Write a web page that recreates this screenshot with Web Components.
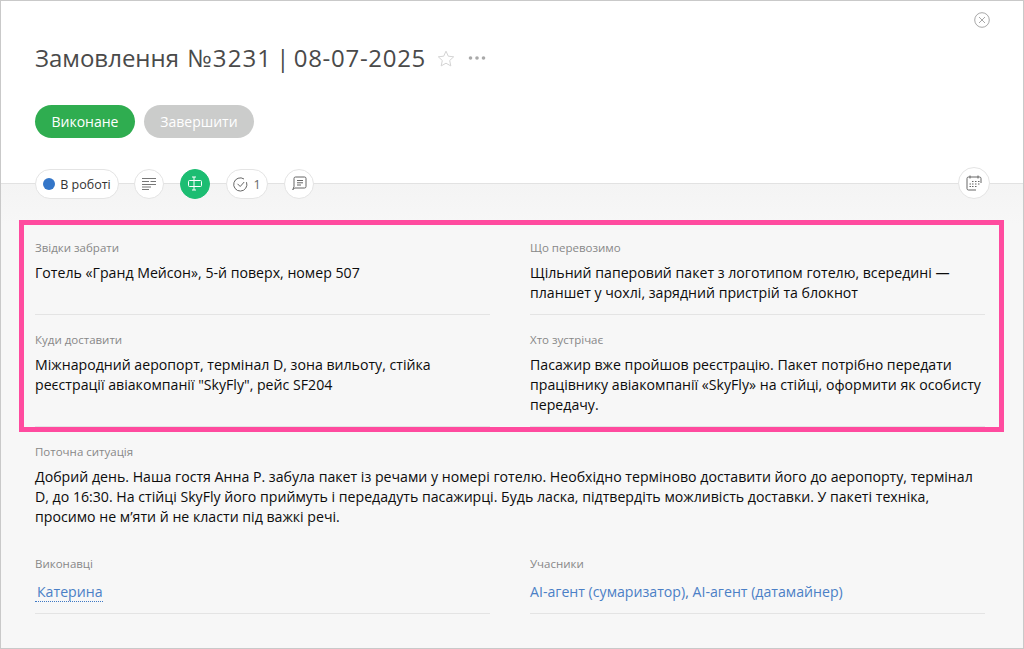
<!DOCTYPE html>
<html lang="uk">
<head>
<meta charset="utf-8">
<title>Замовлення</title>
<style>
  html, body { margin: 0; height: 100%; }
  body { font-family: "Open Sans", "Noto Sans", sans-serif; background: #fff; overflow: hidden; }
</style>
</head>
<body>
<order-card>
  <order-header slot="header"></order-header>
  <data-field label="Звідки забрати">Готель «Гранд Мейсон», 5-й поверх, номер 507</data-field>
  <data-field label="Що перевозимо">Щільний паперовий пакет з логотипом готелю, всередині — планшет у чохлі, зарядний пристрій та блокнот</data-field>
  <data-field label="Куди доставити">Міжнародний аеропорт, термінал D, зона вильоту, стійка реєстрації авіакомпанії "SkyFly", рейс SF204</data-field>
  <data-field label="Хто зустрічає">Пасажир вже пройшов реєстрацію. Пакет потрібно передати працівнику авіакомпанії «SkyFly» на стійці, оформити як особисту передачу.</data-field>
  <data-field wide label="Поточна ситуація">Добрий день. Наша гостя Анна Р. забула пакет із речами у номері готелю. Необхідно терміново доставити його до аеропорту, термінал D, до 16:30. На стійці SkyFly його приймуть і передадуть пасажирці. Будь ласка, підтвердіть можливість доставки. У пакеті техніка, просимо не м’яти й не класти під важкі речі.</data-field>
  <data-field people label="Виконавці"><user-link dotted>Катерина</user-link></data-field>
  <data-field people label="Учасники"><user-link>AI-агент (сумаризатор)</user-link>, <user-link>AI-агент (датамайнер)</user-link></data-field>
</order-card>

<script>
const cardTemplate = document.createElement('template')
cardTemplate.innerHTML = `
  <style>
    :host {
      display: flex;
      flex-direction: column;
      box-sizing: border-box;
      position: relative;
      width: 1024px;
      height: 649px;
      border: 1px solid #c9c9c9;
      background: #f7f7f7;
      color: #0c0c0c;
    }
    .grid {
      display: grid;
      grid-template-columns: 455px 455px;
      column-gap: 40px;
      padding: 56px 0 0 34px;
      background: linear-gradient(#f4f4f4, #f7f7f7 40px);
      flex: 1;
      align-content: start;
    }
    .frame {
      position: absolute;
      left: 18px;
      top: 219px;
      width: 975px;
      height: 202px;
      border: 5px solid #ff4b9f;
      pointer-events: none;
    }
  </style>
  <slot name="header"></slot>
  <div class="grid"><slot></slot></div>
  <div class="frame"></div>
`
class OrderCard extends HTMLElement {
  constructor() {
    super()
    this.attachShadow({ mode: 'open' })
    this.shadowRoot.appendChild(cardTemplate.content.cloneNode(true))
  }
}

const headerTemplate = document.createElement('template')
headerTemplate.innerHTML = `
  <style>
    :host {
      display: block;
      box-sizing: border-box;
      height: 183px;
      padding: 40px 0 0 34px;
      background: #fff;
      border-bottom: 1px solid #e2e2e2;
      position: relative;
    }
    .title { display: flex; align-items: center; height: 34px; color: #4a4a4a; }
    h1 { margin: 0; font-size: 24px; font-weight: 400; line-height: 34px; white-space: nowrap; word-spacing: -2px; }
    h1 span { letter-spacing: .7px; }
    h1 .num { letter-spacing: 1.1px; margin-left: 4px; }
    .star { margin-left: 11px; }
    .dots { margin-left: 13px; }
    .buttons { display: flex; gap: 9px; margin-top: 30px; }
    button {
      font: inherit;
      font-size: 14px;
      height: 33px;
      border: 0;
      border-radius: 17px;
      color: #fff;
      padding: 0;
    }
    .done { width: 100px; background: #2fad50; }
    .finish { width: 110px; background: #cbcccb; }
    .tabs { display: flex; align-items: center; margin-top: 30px; height: 31px; }
    .chip {
      box-sizing: border-box;
      height: 30px;
      border: 1px solid #e4e4e4;
      border-radius: 15px;
      background: #fff;
      display: flex;
      align-items: center;
      justify-content: center;
      font-size: 12.5px;
      color: #333;
    }
    .round { width: 30px; }
    .status { width: 84px; gap: 5px; margin-right: 15px; padding-top: 1px; }
    .dot { width: 12px; height: 12px; border-radius: 50%; background: #3476c8; }
    .active { background: #1cbd72; border-color: #1cbd72; margin: 0 16px; }
    .count { width: 42px; gap: 5px; margin-right: 16px; color: #666; padding-top: 1px; }
    .calendar { position: absolute; right: 33px; top: 166px; width: 32px; height: 32px; border-radius: 16px; }
    .close { position: absolute; right: 33px; top: 11px; }
  </style>
  <div class="title">
    <h1>Замовлення <span class="num">№3231</span> | <span>08-07-2025</span></h1>
    <svg class="star" width="18" height="17" viewBox="0 0 18 17" fill="none" stroke="#d4d4d4"><path d="M9 1.2l2.3 5 5.4.6-4 3.7 1.1 5.4L9 13.2l-4.8 2.7 1.1-5.4-4-3.7 5.4-.6z"/></svg>
    <svg class="dots" width="18" height="4" viewBox="0 0 18 4" fill="#a9a9a9"><circle cx="2.500" cy="2" r="1.800"/><circle cx="9" cy="2" r="1.800"/><circle cx="15.500" cy="2" r="1.800"/></svg>
  </div>
  <div class="buttons">
    <button class="done">Виконане</button>
    <button class="finish">Завершити</button>
  </div>
  <div class="tabs">
    <div class="chip status"><span class="dot"></span>В роботі</div>
    <div class="chip round">
      <svg width="14" height="12" viewBox="0 0 14 12" stroke="#777" fill="none"><path d="M0 .5h14M0 3.500h7M8.500 3.500H14M0 6.500h14M0 9h9M0 11.500h7"/></svg>
    </div>
    <div class="chip round active">
      <svg width="15" height="15" viewBox="0 0 15 15" stroke="#fff" fill="none"><rect x=".5" y="4.500" width="13" height="6" rx="1"/><path d="M6 1v13M4 1h4M4 14h4"/></svg>
    </div>
    <div class="chip count">
      <svg width="15" height="15" viewBox="0 0 15 15" stroke="#666" fill="none"><path d="M13.500 5.200A6.600 6.600 0 1 1 11 2"/><path d="M4.500 6.800l2.700 2.700 4-4.500"/></svg>1
    </div>
    <div class="chip round">
      <svg width="15" height="15" viewBox="0 0 15 15" stroke="#666" fill="none"><path d="M3.500 1h9A1.500 1.500 0 0 1 14 2.500v8a1.500 1.500 0 0 1-1.500 1.500h-10L.8 13.800 2 10.500v-8A1.500 1.500 0 0 1 3.500 1z"/><path d="M5 4.500h6M5 6.800h6M5 9h4"/></svg>
    </div>
  </div>
  <div class="chip calendar">
    <svg width="16" height="16" viewBox="0 0 16 16" stroke="#666" fill="none"><path d="M15 8V3.500A1.500 1.500 0 0 0 13.500 2h-11A1.500 1.500 0 0 0 1 3.500v10A1.500 1.500 0 0 0 2.500 15H10"/><path d="M4 .5v3M12 .5v3"/><path d="M6 6.500h1.500M9 6.500h1.500M12 6.500h1.500M3.500 9H5M6 9h1.500M9 9h1.500M12 9h1.500M3.500 11.500H5M6 11.500h1.500M9 11.500h1.500" stroke-width="1"/></svg>
  </div>
  <svg class="close" width="16" height="16" viewBox="0 0 16 16" fill="none" stroke="#a8a8a8"><circle cx="8" cy="8" r="7.300"/><path d="M5 5l6 6M11 5l-6 6"/></svg>
`
class OrderHeader extends HTMLElement {
  constructor() {
    super()
    this.attachShadow({ mode: 'open' })
    this.shadowRoot.appendChild(headerTemplate.content.cloneNode(true))
  }
}

const fieldTemplate = document.createElement('template')
fieldTemplate.innerHTML = `
  <style>
    :host {
      display: block;
      box-sizing: border-box;
      padding-bottom: 11px;
      border-bottom: 1px solid #e4e4e4;
      margin-bottom: 17px;
    }
    :host([wide]) { grid-column: 1 / -1; border-bottom: 0; margin-bottom: 29px; padding-bottom: 0; width: 950px; }
    :host([people]) { height: 58px; padding-bottom: 0; margin-bottom: 0; }
    .label { font-size: 11.500px; line-height: 16px; color: #888; }
    .value { font-size: 14.150px; line-height: 20px; margin-top: 7px; }
    :host([people]) .value { margin-top: 10px; color: #3f6fae; }
  </style>
  <div class="label"></div>
  <div class="value"><slot></slot></div>
`
class DataField extends HTMLElement {
  constructor() {
    super()
    this.attachShadow({ mode: 'open' })
    this.shadowRoot.appendChild(fieldTemplate.content.cloneNode(true))
    this.shadowRoot.querySelector('.label').textContent = this.getAttribute('label')
  }
}

const linkTemplate = document.createElement('template')
linkTemplate.innerHTML = `
  <style>
    :host { display: inline-block; color: #4b80c6; }
    :host([dotted]) { border-bottom: 1px dotted #3f79c4; padding-left: 2px; line-height: 19px; }
  </style>
  <slot></slot>
`
class UserLink extends HTMLElement {
  constructor() {
    super()
    this.attachShadow({ mode: 'open' })
    this.shadowRoot.appendChild(linkTemplate.content.cloneNode(true))
  }
}

customElements.define('order-card', OrderCard)
customElements.define('order-header', OrderHeader)
customElements.define('data-field', DataField)
customElements.define('user-link', UserLink)
</script>
</body>
</html>
